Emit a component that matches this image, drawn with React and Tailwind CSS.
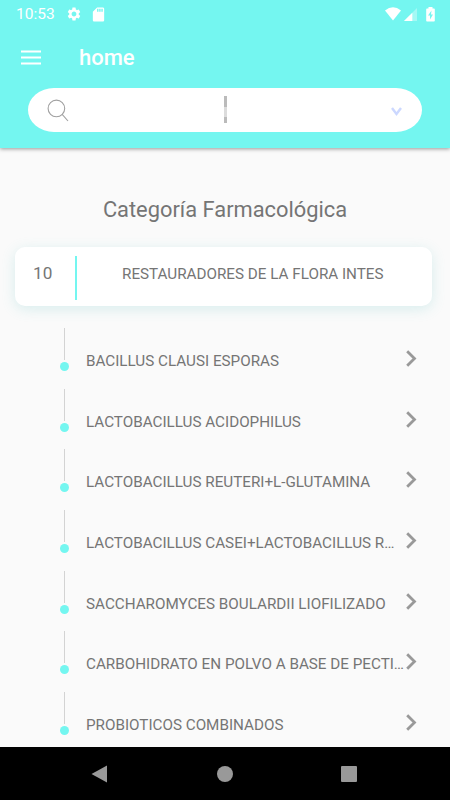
import React from "react";
import { MdSettings, MdSdCard } from "react-icons/md";

const items = [
  "BACILLUS CLAUSI ESPORAS",
  "LACTOBACILLUS ACIDOPHILUS",
  "LACTOBACILLUS REUTERI+L-GLUTAMINA",
  "LACTOBACILLUS CASEI+LACTOBACILLUS R…",
  "SACCHAROMYCES BOULARDII LIOFILIZADO",
  "CARBOHIDRATO EN POLVO A BASE DE PECTI…",
  "PROBIOTICOS COMBINADOS",
];

function StatusBar() {
  return (
    <div className="flex h-7 items-center pl-4 pr-[15px] text-white">
      <span className="w-[39px] text-[15.5px] leading-7 whitespace-nowrap">10:53</span>
      <MdSettings className="ml-[11px] size-4" />
      <MdSdCard className="ml-[8px] size-[17px]" />
      <svg className="ml-auto h-[14px] w-4" viewBox="0 0 16 14" fill="currentColor">
        <path d="M0 3.6Q8-3 16 3.6L8 13.5Z" />
      </svg>
      <svg className="ml-[3px] h-[13px] w-[13px]" viewBox="0 0 13 13" fill="currentColor">
        <path opacity=".35" d="M0 13L13 0V13Z" />
        <path d="M0 13L8.3 4.7V13Z" />
      </svg>
      <svg className="ml-[9px] h-[15px] w-[9px]" viewBox="0 0 9 15">
        <path fill="currentColor" d="M2.5 0h4v1.5H8q.8 0 .8.8v11.5q0 .8-.8.8H1q-.8 0-.8-.8V2.3q0-.8.8-.8h1.5z" />
        <path fill="#74f6f0" d="M5.5 3.5L2 8.5h2v4L7 7.500H5z" />
      </svg>
    </div>
  );
}

function Header() {
  return (
    <header className="relative h-[148px] bg-[#74f6f0] shadow-[0_1px_4px_rgba(0,0,0,0.4)]">
      <StatusBar />
      <div className="flex h-[60px] items-center pl-[21px] text-white">
        <svg className="-mt-[2px] h-[15px] w-5" viewBox="0 0 20 15" fill="currentColor">
          <path d="M0 .5h20v2H0zM0 6.5h20v2H0zM0 12.5h20v2H0z" />
        </svg>
        <h1 className="ml-[38px] text-[22px] leading-[60px] font-medium">home</h1>
      </div>
      <div className="mx-7 flex h-11 items-center rounded-[26px/22px] bg-white pr-5 pl-[19px]">
        <svg className="size-[23px]" viewBox="0 0 23 23" fill="none" stroke="#a0a0a0" strokeWidth="1.1">
          <circle cx="9.4" cy="9.4" r="8.3" />
          <path d="M15.2 15.4L21 22" />
        </svg>
        <div className="-mt-px ml-[154px] flex h-[27px] w-[3px] flex-col bg-[#dcdcdc]">
          <div className="h-[11px] bg-[#bbb]" />
          <div className="mt-auto h-[6px] bg-[#bbb]" />
        </div>
        <svg className="mt-[3px] ml-auto h-[9px] w-[11px]" viewBox="0 0 11 9" fill="none" stroke="#ccd8ff" strokeWidth="2.4">
          <path d="M1 1l4.500 6L10 1" />
        </svg>
      </div>
    </header>
  );
}

function Item({ name }) {
  return (
    <li className="flex h-[60.6px] shrink-0">
      <div className="ml-[60px] flex w-[9px] shrink-0 flex-col items-center">
        <div className="h-8 w-px bg-[#d3d3d3]" />
        <div className="mt-[2px] size-[9px] rounded-full bg-[#74f6f0]" />
      </div>
      <span className="mt-[23px] ml-[17px] w-[320px] shrink-0 text-[15.22px] leading-5 whitespace-nowrap">{name}</span>
      <svg className="mt-[22px] h-[17px] w-[11px] shrink-0" viewBox="0 0 11 17" fill="none" stroke="#999" strokeWidth="2.8">
        <path d="M1.2 1.200L8.500 8.500L1.200 15.800" />
      </svg>
    </li>
  );
}

export default function App() {
  return (
    <div className="flex h-[800px] w-[450px] flex-col overflow-hidden bg-[#fafafa] font-[Roboto,sans-serif] text-[#757575]">
      <Header />
      <main className="flex min-h-0 flex-1 flex-col overflow-hidden">
        <h2 className="mt-[46px] text-center text-[21.85px] leading-8">Categoría Farmacológica</h2>
        <div className="mt-[21px] mr-[18px] ml-[15px] flex h-[59px] shrink-0 rounded-[10px] bg-white shadow-[0_3px_14px_rgba(80,190,190,0.2)]">
          <span className="mt-[14px] w-[60px] pl-[18px] text-[17.2px] leading-6">10</span>
          <div className="mt-[9px] h-11 w-[2px] bg-[#74f6f0]" />
          <span className="mt-[17px] ml-[45px] text-[15.22px] leading-5 whitespace-nowrap">RESTAURADORES DE LA FLORA INTES</span>
        </div>
        <ul className="mt-[22.3px] flex flex-col">
          {items.map((name) => (
            <Item key={name} name={name} />
          ))}
        </ul>
      </main>
      <nav className="relative flex h-[53px] shrink-0 items-center bg-black pr-[93px] pl-[91px]">
        <svg className="h-[18px] w-4" viewBox="0 0 16 18" fill="#999">
          <path d="M16 .5v17L.5 9z" />
        </svg>
        <div className="ml-[110px] size-4 rounded-full bg-[#999]" />
        <div className="ml-auto size-4 rounded-[1px] bg-[#999]" />
      </nav>
    </div>
  );
}
